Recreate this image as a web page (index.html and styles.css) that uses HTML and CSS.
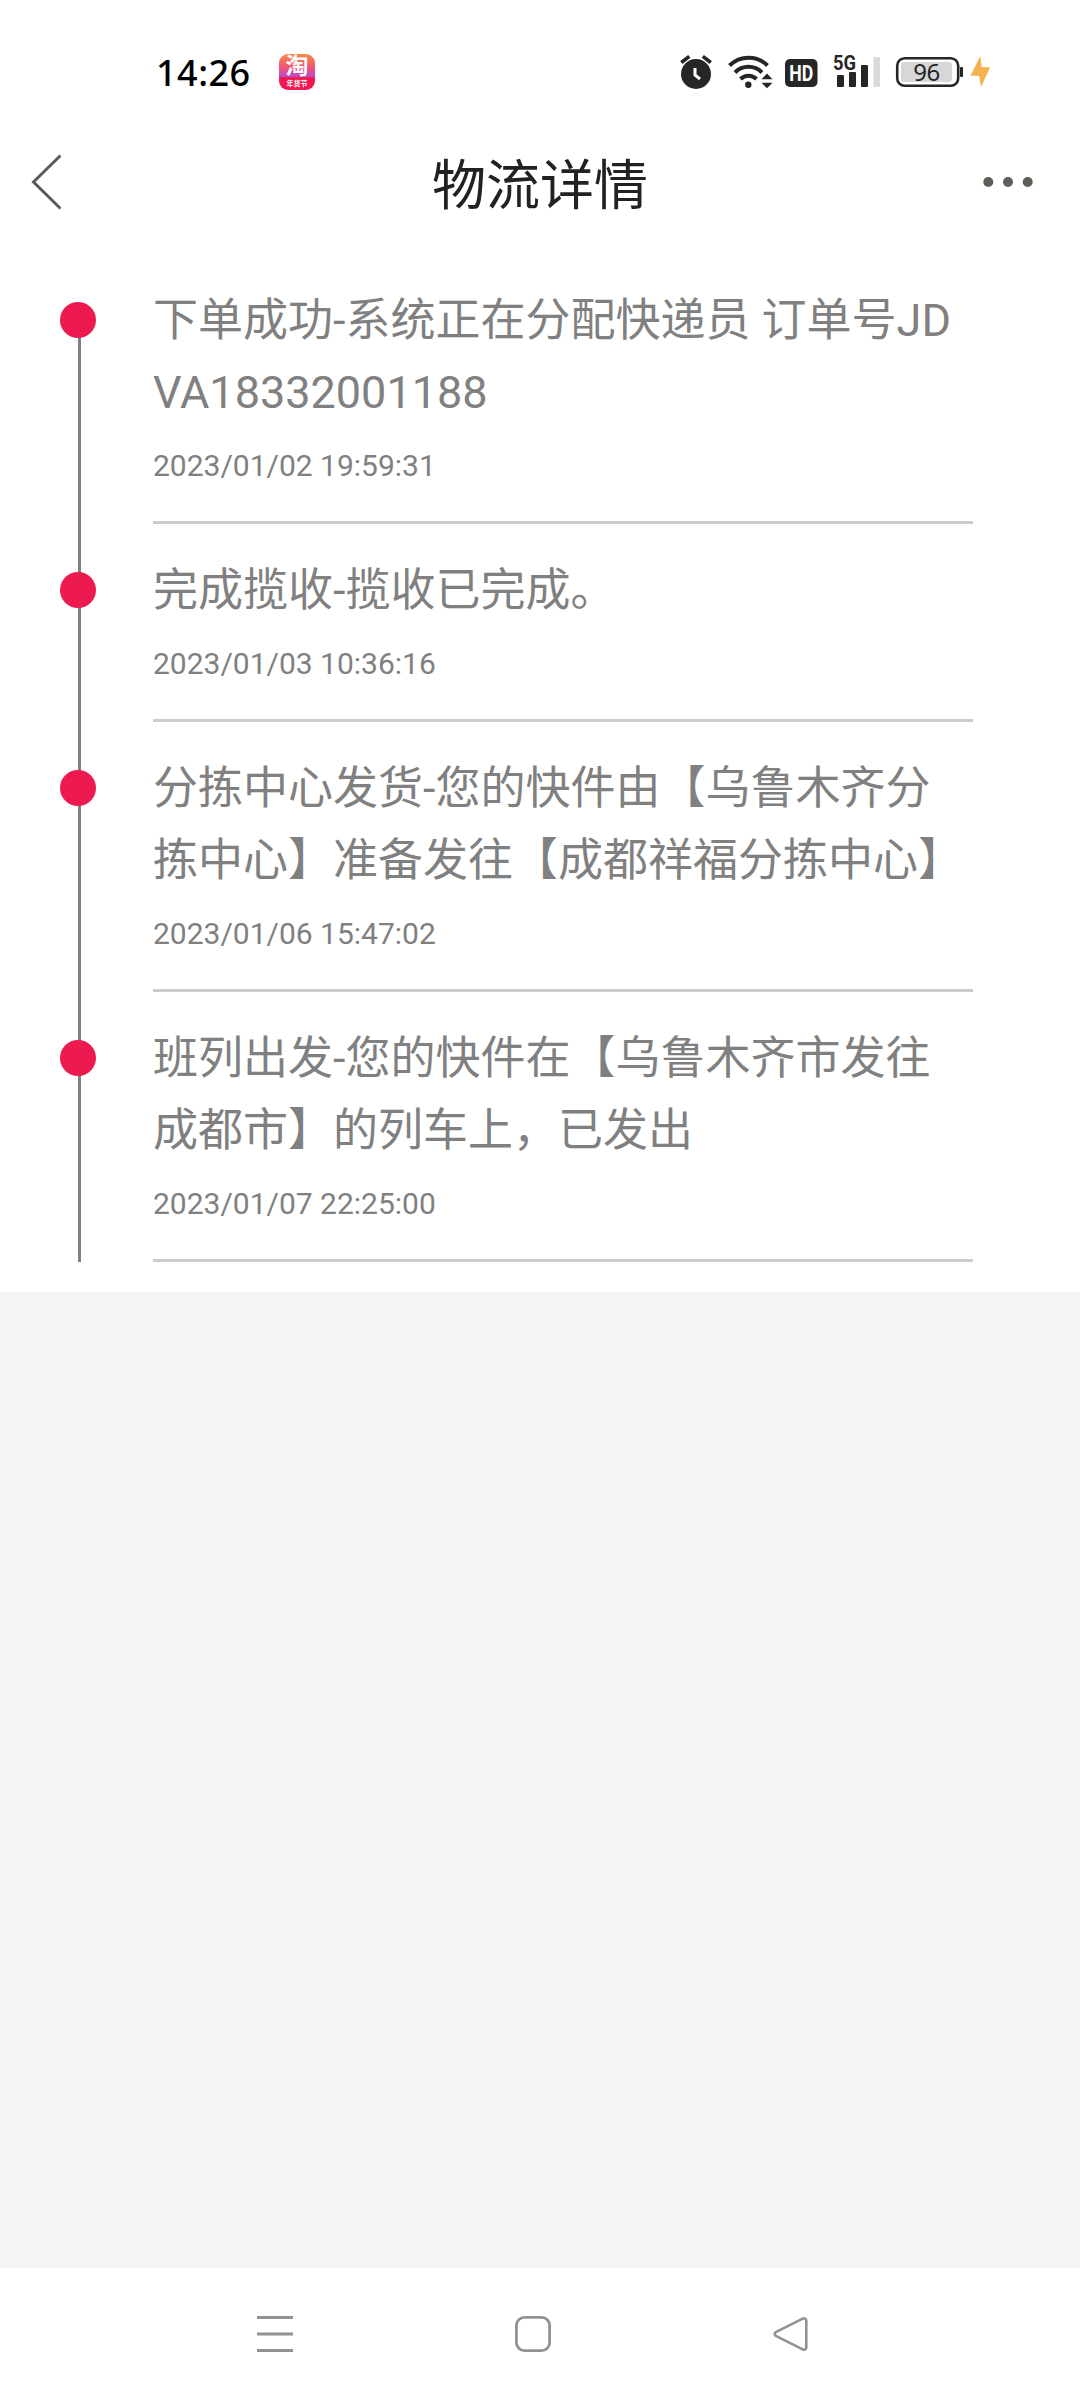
FILE: index.html
```html
<!DOCTYPE html>
<html lang="zh-CN">
<head>
    <meta charset="UTF-8">
    <meta name="viewport" content="width=device-width, initial-scale=1.0">
    <title>物流详情</title>
    <link rel="stylesheet" href="styles.css">
</head>
<body>
    <!-- 状态栏 -->
    <div class="status-bar">
        <span class="clock">14:26</span>
        <div class="app-icon">
            <span class="app-logo">淘</span>
            <span class="app-label">年货节</span>
        </div>
        <svg class="status-icons" width="320" height="40" viewBox="676 52 320 40">
            <!-- 闹钟 -->
            <circle cx="696" cy="74" r="15" fill="#262626"/>
            <path d="M681.3 62.5l8-6.2M702.8 56.3l8 6.2" stroke="#262626" stroke-width="3.6"/>
            <path d="M695 68v7l5 4" fill="none" stroke="#fff" stroke-width="3"/>
            <!-- WiFi -->
            <g fill="none" stroke="#262626" stroke-width="4">
                <path d="M729.5 65.5a27 27 0 0 1 38 0"/>
                <path d="M735 72.5a19 19 0 0 1 27 0"/>
                <path d="M740.5 79a11.5 11.5 0 0 1 16 0"/>
            </g>
            <circle cx="748.3" cy="84.7" r="3.2" fill="#262626"/>
            <path d="M761.5 79.3l5.5-5.8 5.5 5.8zM761.5 82.8l5.5 5.4 5.5-5.4z" fill="#262626"/>
            <!-- HD -->
            <rect x="785" y="59" width="32.5" height="28" rx="5" fill="#262626"/>
            <text class="hd-text" x="801.3" y="80.7" text-anchor="middle" textLength="24" lengthAdjust="spacingAndGlyphs">HD</text>
            <!-- 5G信号 -->
            <text class="net-text" x="833" y="69.6" textLength="23" lengthAdjust="spacingAndGlyphs">5G</text>
            <g fill="#262626">
                <rect x="837" y="75" width="7" height="12" rx="1"/>
                <rect x="849" y="72" width="7" height="15" rx="1"/>
                <rect x="861" y="65" width="7" height="22" rx="1"/>
                <rect x="873.5" y="57" width="6.5" height="30" rx="1" fill="#d9d9d9"/>
            </g>
            <!-- 电池 -->
            <rect x="897.2" y="58.2" width="61" height="27.6" rx="7.5" fill="none" stroke="#262626" stroke-width="2.6"/>
            <rect x="901" y="62" width="51" height="20" rx="3" fill="#d7d7d7"/>
            <rect x="960" y="67" width="3" height="10" rx="1" fill="#262626"/>
            <text class="battery-text" x="926.8" y="81" text-anchor="middle" textLength="27">96</text>
            <path d="M980 56.5l-9.5 19.2h8.6l1.9 11.3 9.2-19.7h-8.4l-1.4-10.8z" fill="#f2b350"/>
        </svg>
    </div>

    <!-- 标题栏 -->
    <div class="header">
        <svg width="30" height="58" viewBox="0 0 30 58">
            <path d="M29.5 2.5L2.5 29l27 26.5" fill="none" stroke="#5a5a5a" stroke-width="3"/>
        </svg>
        <h1 class="title">物流详情</h1>
        <svg width="50" height="12" viewBox="0 0 50 12" fill="#5f5f5a">
            <circle cx="5.3" cy="6" r="5"/>
            <circle cx="25" cy="6" r="5"/>
            <circle cx="44.7" cy="6" r="5"/>
        </svg>
    </div>

    <!-- 物流时间线 -->
    <div class="timeline">
        <div class="item">
            <div class="rail"><span class="dot"></span></div>
            <div class="info">
                <div class="text">下单成功-系统正在分配快递员 订单号JDVA18332001188</div>
                <div class="time">2023/01/02 19:59:31</div>
            </div>
        </div>
        <div class="item">
            <div class="rail"><span class="dot"></span></div>
            <div class="info">
                <div class="text">完成揽收-揽收已完成。</div>
                <div class="time">2023/01/03 10:36:16</div>
            </div>
        </div>
        <div class="item">
            <div class="rail"><span class="dot"></span></div>
            <div class="info">
                <div class="text">分拣中心发货-您的快件由【乌鲁木齐分拣中心】准备发往【成都祥福分拣中心】</div>
                <div class="time">2023/01/06 15:47:02</div>
            </div>
        </div>
        <div class="item">
            <div class="rail"><span class="dot"></span></div>
            <div class="info">
                <div class="text">班列出发-您的快件在【乌鲁木齐市发往成都市】的列车上，已发出</div>
                <div class="time">2023/01/07 22:25:00</div>
            </div>
        </div>
    </div>

    <!-- 系统导航键 -->
    <div class="nav-bar">
        <svg width="36" height="36" viewBox="0 0 36 36">
            <path d="M0 1.5h36M0 18h36M0 34.5h36" stroke="#929292" stroke-width="3"/>
        </svg>
        <svg width="36" height="36" viewBox="0 0 36 36">
            <rect x="1.4" y="1.4" width="33.2" height="33.2" rx="8" fill="none" stroke="#929292" stroke-width="2.8"/>
        </svg>
        <svg width="36" height="36" viewBox="0 0 36 36">
            <path d="M29.7 2.7L2.8 16.2a2 2 0 0 0 0 3.6L29.7 33.3a2.4 2.4 0 0 0 3.6-2.1V4.8a2.4 2.4 0 0 0-3.6-2.1z" fill="none" stroke="#929292" stroke-width="2.6"/>
        </svg>
    </div>
</body>
</html>
```
FILE: styles.css
```css
/* 全局 */
body {
    margin: 0;
    height: 2400px;
    display: flex;
    flex-direction: column;
    background-color: #f5f5f5;
    font-family: Roboto, "Noto Sans CJK SC", sans-serif;
}
svg {
    display: block;
}
/* 状态栏 */
.status-bar {
    height: 144px;
    padding: 0 84px 0 156px;
    box-sizing: border-box;
    display: flex;
    align-items: center;
    background-color: #fff;
}
.clock {
    width: 123px;
    padding-top: 2px;
    box-sizing: border-box;
    font-family: "Noto Sans", sans-serif;
    font-size: 36px;
    font-weight: 500;
    line-height: 36px;
    letter-spacing: 0.5px;
    color: #000;
}
.app-icon {
    width: 36px;
    height: 36px;
    border-radius: 9px;
    overflow: hidden;
    display: flex;
    flex-direction: column;
    background: linear-gradient(#f58a4b 0, #f0507a 40%, #b94bd0 62%, #f0184f 66%);
    color: #fff;
    text-align: center;
}
.app-logo {
    height: 24px;
    font-size: 23px;
    font-weight: bold;
    line-height: 25px;
}
.app-label {
    font-size: 7px;
    font-weight: bold;
    line-height: 12px;
}
.status-icons {
    margin-left: auto;
}
.hd-text {
    font-family: Roboto, sans-serif;
    font-size: 22px;
    font-weight: bold;
    fill: #fff;
}
.net-text {
    font-family: Roboto, sans-serif;
    font-size: 20px;
    font-weight: bold;
    fill: #262626;
}
.battery-text {
    font-family: "Noto Sans", sans-serif;
    font-size: 24px;
    fill: #262626;
}
/* 标题栏 */
.header {
    height: 110px;
    padding: 0 47px 35px 31px;
    box-sizing: border-box;
    display: flex;
    align-items: center;
    justify-content: space-between;
    background-color: #fff;
}
.title {
    margin: 11px 0 0 36px;
    font-size: 54px;
    font-weight: normal;
    line-height: 60px;
    color: #222;
}
/* 时间线 */
.timeline {
    padding-bottom: 30px;
    background-color: #fff;
}
.item {
    display: flex;
    padding: 0 107px 0 60px;
}
.rail {
    width: 93px;
    padding-top: 48px;
    background: linear-gradient(#808080, #808080) no-repeat 18px 0 / 3px 100%;
}
/* 第一个节点上方没有连线 */
.item:first-child .rail {
    background-position: 18px 60px;
}
.dot {
    display: block;
    width: 36px;
    height: 36px;
    border-radius: 50%;
    background-color: #ed1a50;
}
.info {
    flex: 1;
    padding: 31px 0 37px;
    border-bottom: 3px solid #ccc;
}
.text {
    font-size: 45px;
    line-height: 72px;
    color: #808080;
    word-break: break-all;
    text-spacing-trim: space-all;
}
.time {
    padding-top: 19px;
    font-size: 30px;
    line-height: 36px;
    color: #808080;
}
/* 系统导航键 */
.nav-bar {
    height: 132px;
    margin-top: auto;
    padding: 0 271px 0 257px;
    box-sizing: border-box;
    display: flex;
    align-items: center;
    justify-content: space-between;
    background-color: #fff;
}
```
